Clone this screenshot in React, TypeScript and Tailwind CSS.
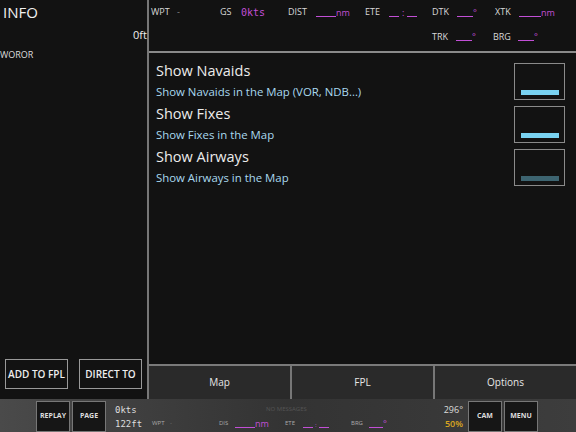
import React from "react";

const sans = { fontFamily: '"Open Sans", "Noto Sans", sans-serif' };
const mono = { fontFamily: '"DejaVu Sans Mono", "Liberation Mono", monospace' };

type Toggle = { title: string; subtitle: string; on: boolean };

const toggles: Toggle[] = [
  { title: "Show Navaids", subtitle: "Show Navaids in the Map (VOR, NDB...)", on: true },
  { title: "Show Fixes", subtitle: "Show Fixes in the Map", on: true },
  { title: "Show Airways", subtitle: "Show Airways in the Map", on: false },
];

function Blank({ w, unit }: { w: string; unit?: string }) {
  return (
    <span className="flex items-end text-[#c24fd6]">
      <span className={`${w} border-b border-[#c24fd6] h-[9px]`} />
      {unit && <span className="text-[9px] leading-none">{unit}</span>}
    </span>
  );
}

function ToggleRow({ item }: { item: Toggle }) {
  return (
    <div className="flex h-[43px] items-start justify-between pr-[11px]">
      <div className="flex flex-col pl-[7px]">
        <span className="text-[14.5px] leading-[21px] text-[#ececec]">{item.title}</span>
        <span className="text-[11.4px] leading-[21px] text-[#a9d9ef]">{item.subtitle}</span>
      </div>
      <div className="mt-[3px] flex h-[37px] w-[51px] items-end justify-center border border-[#8a8a8a] pb-[4px]">
        <div className={`h-[5px] w-[38px] ${item.on ? "bg-[#79d2f1]" : "bg-[#3d6470]"}`} />
      </div>
    </div>
  );
}

export default function App() {
  return (
    <div className="flex h-[432px] w-[576px] flex-col overflow-hidden bg-[#121212] text-white" style={sans}>
      <div className="flex h-[399px]">
        {/* left info panel */}
        <div className="flex w-[149px] flex-col border-r-2 border-[#777]">
          <span className="pl-[3px] pt-[2px] text-[15px] leading-[20px] text-[#f0f0f0]">INFO</span>
          <span className="self-end pt-[6px] text-[11px] leading-[14px] text-[#eee]">0ft</span>
          <span className="pt-[7px] text-[9px] leading-[12px] text-[#ddd]">WOROR</span>
          <div className="mt-auto mb-[10px] flex justify-between px-[5px]">
            <button className="h-[30px] w-[63px] border border-[#999] text-[10px] font-semibold text-[#eee]">
              ADD TO FPL
            </button>
            <button className="h-[30px] w-[63px] border border-[#999] text-[10px] font-semibold text-[#eee]">
              DIRECT TO
            </button>
          </div>
        </div>

        {/* right side */}
        <div className="flex flex-1 flex-col">
          <div className="flex h-[53px] flex-col border-b-2 border-[#8a8a8a] text-[9px] text-[#d8d8d8]">
            <div className="flex h-[24px] items-center pl-[2px]">
              <span className="w-[26px]">WPT</span>
              <span className="w-[43px] text-[#888]">-</span>
              <span className="w-[21px]">GS</span>
              <span className="w-[47px] text-[10px] text-[#c24fd6]" style={mono}>0kts</span>
              <span className="w-[28px]">DIST</span>
              <span className="w-[49px]"><Blank w="w-[20px]" unit="nm" /></span>
              <span className="w-[24px]">ETE</span>
              <span className="w-[43px] flex items-end text-[#c24fd6]">
                <span className="h-[9px] w-[10px] border-b border-[#c24fd6]" />
                <span className="px-[3px] leading-none">:</span>
                <span className="h-[9px] w-[10px] border-b border-[#c24fd6]" />
              </span>
              <span className="w-[25px]">DTK</span>
              <span className="w-[38px]"><Blank w="w-[16px]" unit="°" /></span>
              <span className="w-[24px]">XTK</span>
              <span><Blank w="w-[22px]" unit="nm" /></span>
            </div>
            <div className="flex h-[25px] items-center pl-[283px]">
              <span className="w-[24px]">TRK</span>
              <span className="w-[37px]"><Blank w="w-[16px]" unit="°" /></span>
              <span className="w-[25px]">BRG</span>
              <span><Blank w="w-[16px]" unit="°" /></span>
            </div>
          </div>

          <div className="flex flex-1 flex-col pt-[7px]">
            {toggles.map((t) => (
              <ToggleRow key={t.title} item={t} />
            ))}
          </div>

          <div className="flex h-[35px] border-t-2 border-[#7a7a7a] bg-[#2a2a2a] text-[10px] text-[#e6e6e6]">
            <div className="flex flex-1 items-center justify-center border-r-2 border-[#777]">Map</div>
            <div className="flex flex-1 items-center justify-center border-r-2 border-[#777]">FPL</div>
            <div className="flex flex-1 items-center justify-center">Options</div>
          </div>
        </div>
      </div>

      {/* bottom status bar */}
      <div className="flex h-[33px] items-stretch bg-gradient-to-r from-[#4a4a4a] via-[#333] to-[#3d3d3d] pt-[2px]">
        <div className="w-[36px]" />
        <button className="w-[34px] border border-[#777] bg-[#161616] text-[7px] font-bold text-[#ddd]">REPLAY</button>
        <button className="ml-[2px] w-[34px] border border-[#777] bg-[#161616] text-[7px] font-bold text-[#ddd]">PAGE</button>
        <div className="ml-[9px] flex w-[37px] flex-col justify-center gap-[2px] text-[9px] leading-[12px] text-[#ddd]" style={mono}>
          <span>0kts</span>
          <span>122ft</span>
        </div>
        <div className="flex flex-1 flex-col justify-center">
          <div className="flex h-[14px] items-center pl-[114px] text-[6px] text-[#555]">NO MESSAGES</div>
          <div className="flex h-[14px] items-center text-[6px] text-[#aaa]">
            <span className="w-[18px]">WPT</span>
            <span className="w-[49px] text-[#777]">-</span>
            <span className="w-[16px]">DIS</span>
            <span className="w-[50px]"><Blank w="w-[20px]" unit="nm" /></span>
            <span className="w-[18px]">ETE</span>
            <span className="w-[48px] flex items-end text-[#c24fd6]">
              <span className="h-[8px] w-[10px] border-b border-[#c24fd6]" />
              <span className="px-[2px] leading-none">:</span>
              <span className="h-[8px] w-[10px] border-b border-[#c24fd6]" />
            </span>
            <span className="w-[18px]">BRG</span>
            <span><Blank w="w-[14px]" unit="°" /></span>
          </div>
        </div>
        <div className="flex w-[34px] flex-col items-end justify-center gap-[2px] pr-[2px] text-[9px] leading-[12px]">
          <span className="text-[#ddd]">296°</span>
          <span className="font-semibold text-[#d9a520]">50%</span>
        </div>
        <button className="ml-[3px] w-[34px] border border-[#777] bg-[#161616] text-[7px] font-bold text-[#ddd]">CAM</button>
        <button className="ml-[2px] w-[34px] border border-[#777] bg-[#161616] text-[7px] font-bold text-[#ddd]">MENU</button>
        <div className="w-[38px]" />
      </div>
    </div>
  );
}
